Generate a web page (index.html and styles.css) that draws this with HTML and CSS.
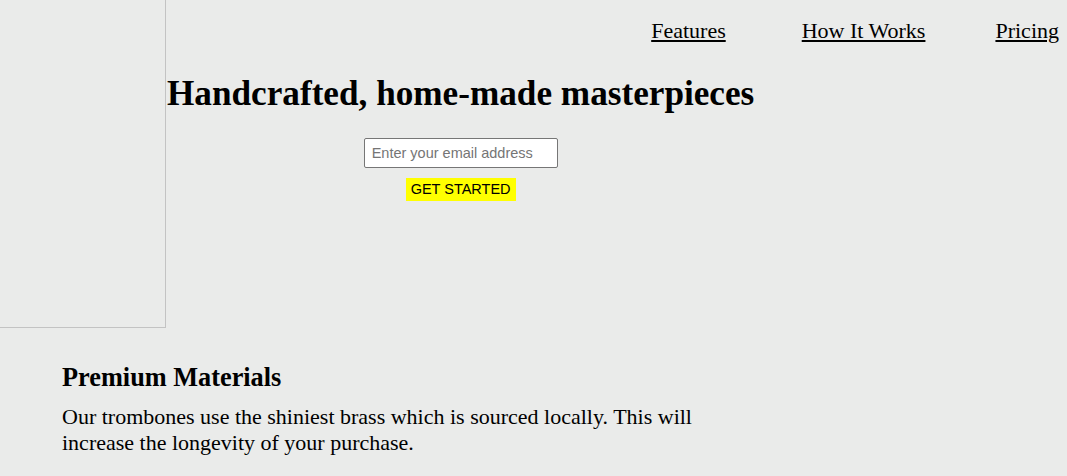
FILE: index.html
```html
<!DOCTYPE html>
<html lang="en">
<head>
<meta charset="utf-8">
<title>Trombones</title>
<link rel="stylesheet" href="styles.css">
</head>
<body>
<header class="top">
  <div class="logo-box"></div>
  <div class="top-main">
    <nav class="nav">
      <a class="nav-link" href="#features">Features</a>
      <a class="nav-link" href="#how-it-works">How It Works</a>
      <a class="nav-link" href="#pricing">Pricing</a>
    </nav>
    <section class="hero">
      <h1 class="hero-title">Handcrafted, home-made masterpieces</h1>
      <form class="signup">
        <input class="email" type="email" placeholder="Enter your email address">
        <button class="cta" type="button">GET STARTED</button>
      </form>
    </section>
  </div>
</header>
<section class="features" id="features">
  <h2 class="feature-title">Premium Materials</h2>
  <p class="feature-text">Our trombones use the shiniest brass which is sourced locally. This will increase the longevity of your purchase.</p>
</section>
</body>
</html>
```

FILE: styles.css
```css
html, body {
  margin: 0;
  padding: 0;
}
body {
  background: #eaebea;
  color: #000;
  font-family: "Liberation Serif", "Times New Roman", serif;
}
.top {
  display: flex;
  align-items: flex-start;
}
.logo-box {
  flex-shrink: 0;
  width: 165px;
  height: 327px;
  border-right: 1px solid #c3c3c3;
  border-bottom: 1px solid #c3c3c3;
}
.top-main {
  flex: 1;
  display: flex;
  flex-direction: column;
}
.nav {
  display: flex;
  justify-content: flex-end;
  gap: 70px;
  padding: 18px 8px 0 0;
}
.nav-link {
  color: #000;
  font-size: 22px;
  text-decoration: underline;
}
.nav-link:first-child {
  margin-right: 6px;
}
.hero {
  align-self: flex-start;
  display: flex;
  flex-direction: column;
  align-items: center;
  margin-left: 1px;
}
.hero-title {
  margin: 30px 0 0;
  font-size: 35.2px;
  font-weight: bold;
  white-space: nowrap;
}
.signup {
  display: flex;
  flex-direction: column;
  align-items: center;
  margin-top: 24px;
}
.email {
  box-sizing: border-box;
  width: 194px;
  height: 30px;
  padding: 0 7px;
  border: 1px solid #767676;
  border-radius: 2px;
  background: #fff;
  font-family: "Liberation Sans", Arial, sans-serif;
  font-size: 14.5px;
  color: #000;
}
.email::placeholder {
  color: #757575;
}
.cta {
  margin-top: 10px;
  padding: 3px 5px;
  border: none;
  background: #ffff00;
  color: #000;
  font-family: "Liberation Sans", Arial, sans-serif;
  font-size: 14.5px;
  line-height: 17px;
}
.features {
  padding: 0 0 0 62px;
  margin-top: 35px;
  width: 680px;
}
.feature-title {
  margin: 0;
  font-size: 26.3px;
  font-weight: bold;
}
.feature-text {
  margin: 11px 0 0;
  font-size: 22px;
}
```
